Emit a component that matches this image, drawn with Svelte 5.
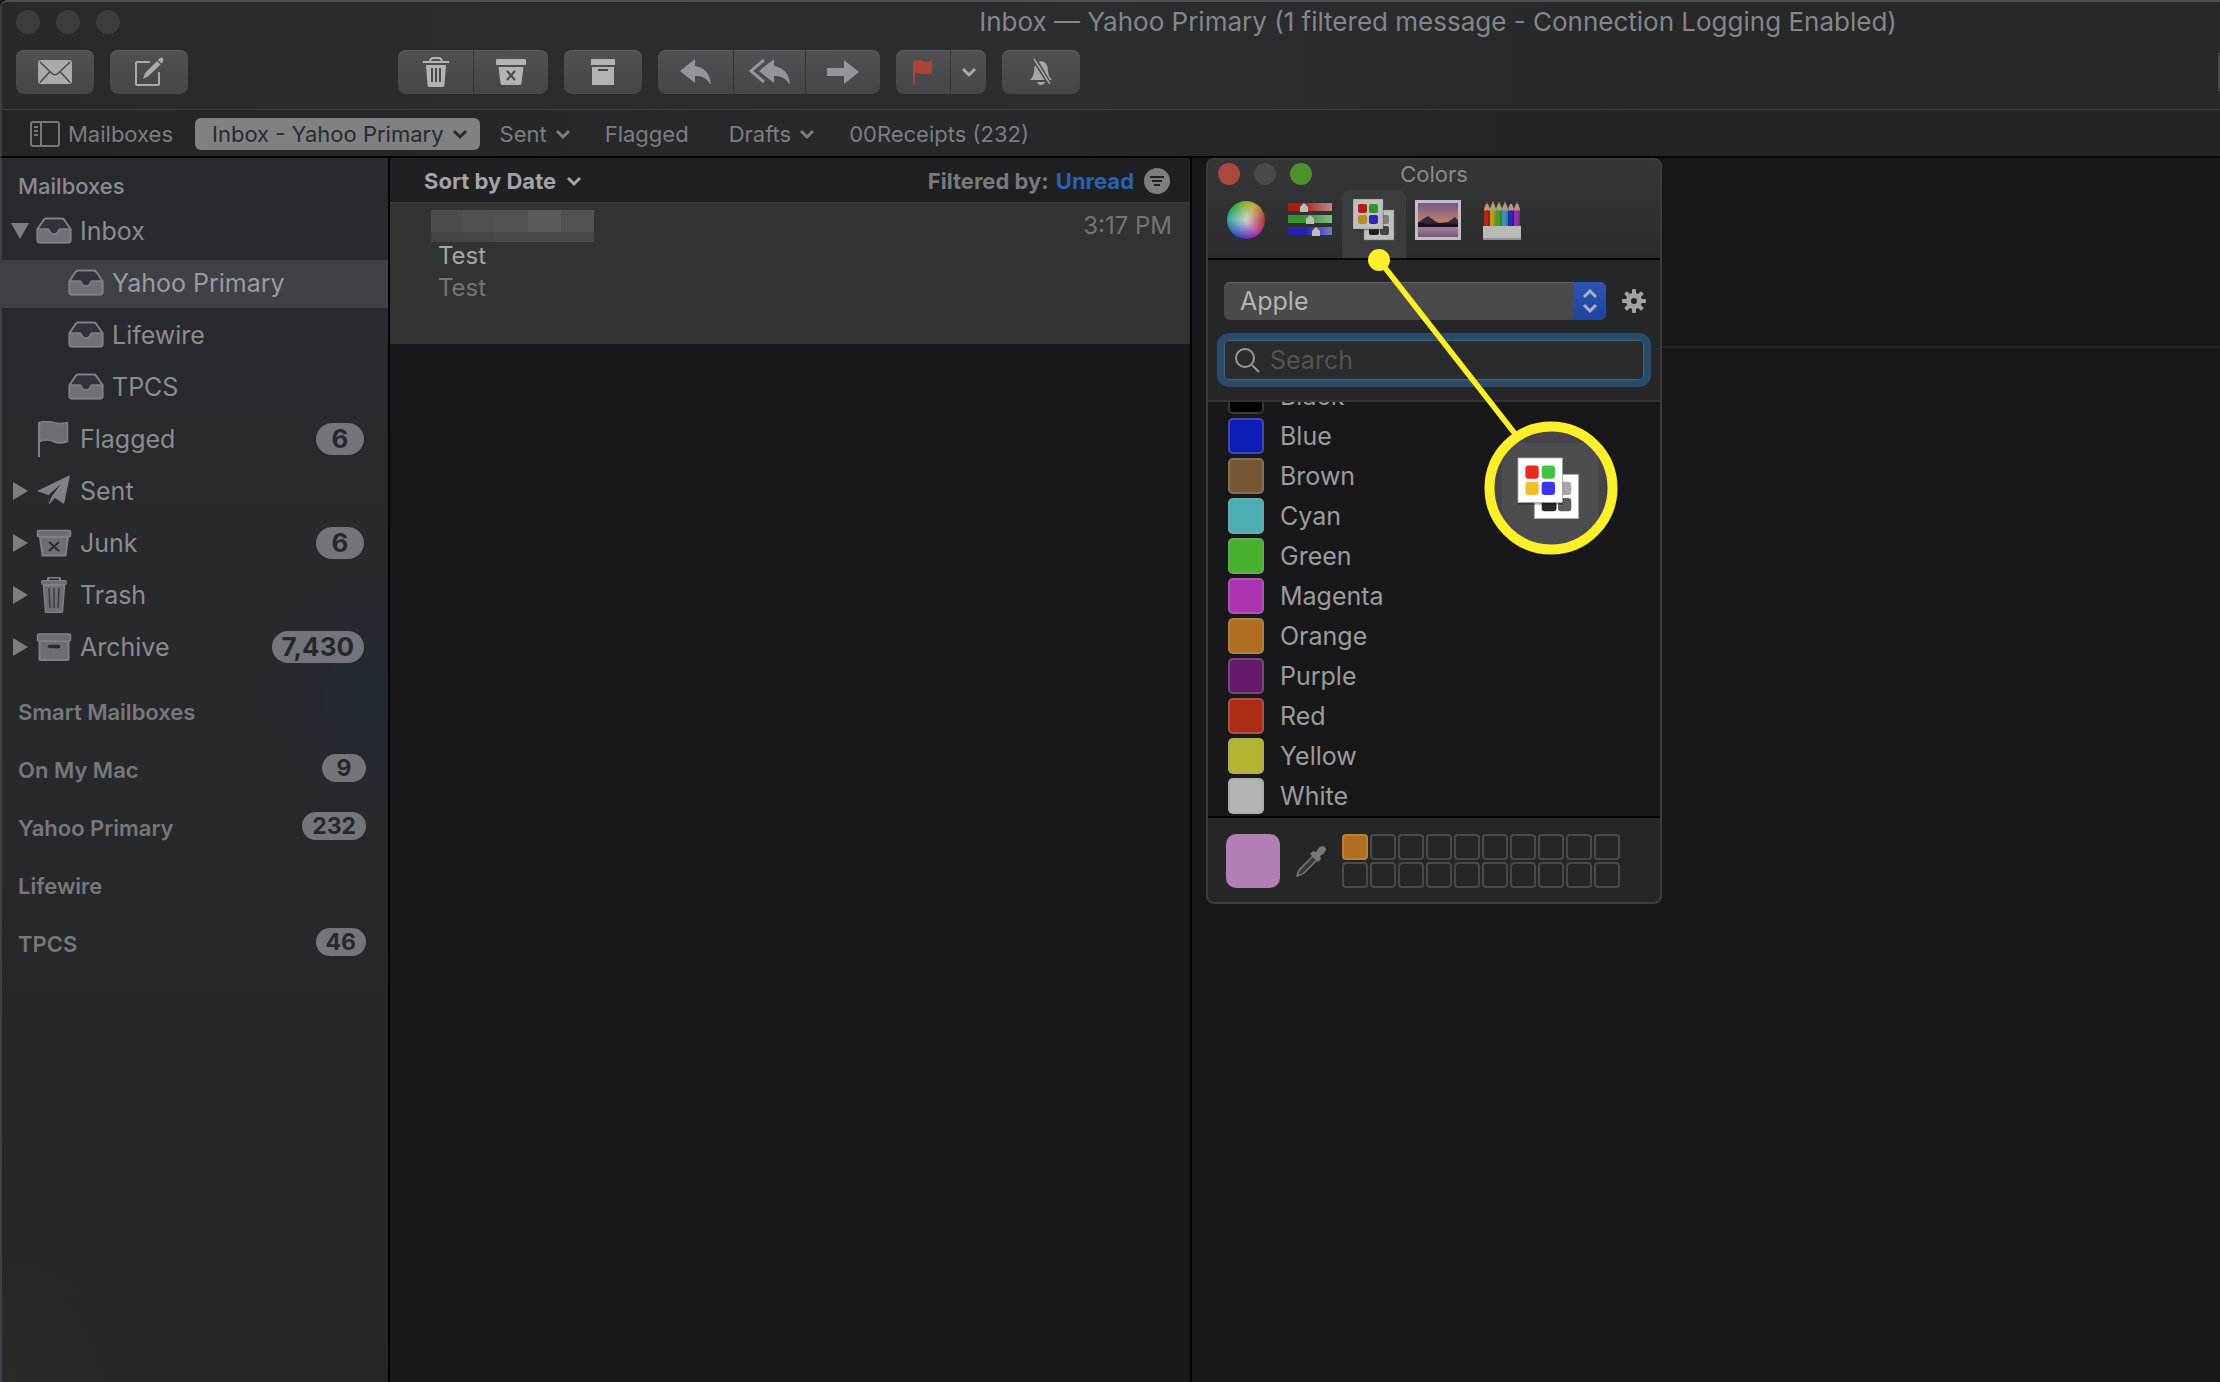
<script lang="ts">
	let query = $state("");
	let palette = $state("Apple");
	let activeTab = $state("palettes");

	const favorites = [
		{ name: "Inbox - Yahoo Primary", menu: true, active: true },
		{ name: "Sent", menu: true },
		{ name: "Flagged" },
		{ name: "Drafts", menu: true },
		{ name: "00Receipts (232)" },
	];

	const mailboxes = [
		{ name: "Inbox", icon: "inbox", arrow: "open" },
		{ name: "Yahoo Primary", icon: "inbox", child: true, selected: true },
		{ name: "Lifewire", icon: "inbox", child: true },
		{ name: "TPCS", icon: "inbox", child: true },
		{ name: "Flagged", icon: "flag", count: "6" },
		{ name: "Sent", icon: "plane", arrow: "closed" },
		{ name: "Junk", icon: "junk", arrow: "closed", count: "6" },
		{ name: "Trash", icon: "trash", arrow: "closed" },
		{ name: "Archive", icon: "archive", arrow: "closed", count: "7,430" },
	];

	const accounts = [
		{ name: "Smart Mailboxes" },
		{ name: "On My Mac", count: "9" },
		{ name: "Yahoo Primary", count: "232" },
		{ name: "Lifewire" },
		{ name: "TPCS", count: "46" },
	];

	const tabs = ["wheel", "sliders", "palettes", "image", "pencils"];

	const colors = [
		{ name: "Black", value: "#000000" },
		{ name: "Blue", value: "#0f1eb6" },
		{ name: "Brown", value: "#765736" },
		{ name: "Cyan", value: "#4caeb3" },
		{ name: "Green", value: "#47b02c" },
		{ name: "Magenta", value: "#ac33b1" },
		{ name: "Orange", value: "#b06f20" },
		{ name: "Purple", value: "#651a6c" },
		{ name: "Red", value: "#ad2c16" },
		{ name: "Yellow", value: "#b3b530" },
		{ name: "White", value: "#b4b4b4" },
	];

	const redacted = ["#4c4c4c", "#505050", "#525252", "#5b5b5b", "#525252", "#444444", "#464646", "#494949", "#494949", "#494949"];
	const wells = Array.from({ length: 20 }, (_, i) => (i === 0 ? "#b06f20" : "transparent"));
	const pencils = ["#b3241b", "#b89a23", "#3f9d2a", "#3f93b0", "#1f2fb0", "#a02ba8"];
</script>

{#snippet chevron()}
	<svg class="chevron" width="16" height="12" viewBox="0 0 16 12"><path d="M2 3l6 6 6-6" /></svg>
{/snippet}

{#snippet cards(bright: boolean)}
	<g class:dimmed={!bright}>
		<rect x="11" y="11" width="30" height="30" fill="#fff" stroke="#999" stroke-width="0.5" />
		<rect x="16" y="27" width="10" height="9" rx="2" fill="#29292b" />
		<rect x="27" y="27" width="9" height="9" rx="2" fill="#5c5c5f" />
		<rect x="27" y="16" width="9" height="9" rx="2" fill="#a8a8a8" />
		<rect x="0.5" y="1.5" width="30" height="30" fill="#000" opacity="0.3" />
		<rect x="0" y="0" width="30" height="30" fill="#fff" stroke="#aaa" stroke-width="0.5" />
		<rect x="5" y="5" width="9" height="9" rx="2" fill="#ea2a1a" />
		<rect x="16" y="5" width="9" height="9" rx="2" fill="#43c343" />
		<rect x="5" y="16" width="9" height="9" rx="2" fill="#f4bd2c" />
		<rect x="16" y="16" width="9" height="9" rx="2" fill="#3d35ee" />
	</g>
{/snippet}

{#snippet mailboxIcon(name: string)}
	<svg class="mailbox-icon" width="36" height="36" viewBox="0 0 36 36">
		{#if name === "inbox"}
			<path d="M1.5 16L8 6.5q.7-1 2-1h16q1.300 0 2 1L34.500 16v11.500q0 2-2 2h-29q-2 0-2-2z" fill="#303339" stroke="#808186" stroke-width="2" />
			<path d="M1.500 16h10.500q1 0 1.500 1.500 1 3.500 4.500 3.500t4.500-3.500Q23 16 24 16h10.500v11.500q0 2-2 2h-29q-2 0-2-2z" fill="#707176" stroke="#808186" stroke-width="1.500" />
		{:else if name === "flag"}
			<path d="M3 1v35" stroke="#808186" stroke-width="2" />
			<path d="M3.500 1.500q8-2 14 0t14 0v19q-8 3-14 0t-14 0z" fill="#6d6e73" stroke="#808186" stroke-width="1.500" />
		{:else if name === "plane"}
			<path d="M1 18L34 2l-6 29-9-6-6 6-1-9z" fill="#808186" />
			<path d="M12 22.500L25 11l-9 12-3 7z" fill="#292a2e" />
			<path d="M16.500 23.500l-3 7" stroke="#808186" />
		{:else if name === "junk"}
			<path d="M4 12h28l-2.500 18.500h-23z" fill="#6d6e73" stroke="#808186" stroke-width="2" />
			<rect x="1.500" y="5.500" width="33" height="6" rx="1" fill="#6d6e73" stroke="#808186" stroke-width="1.500" />
			<path d="M13 17l10 9M23 17l-10 9" stroke="#292a2e" stroke-width="2" />
		{:else if name === "trash"}
			<path d="M12 4V2q0-1.500 1.500-1.500h9q1.500 0 1.500 1.500v2" fill="none" stroke="#808186" stroke-width="2" />
			<rect x="5.500" y="3.500" width="25" height="4" rx="1" fill="#6d6e73" stroke="#808186" />
			<path d="M7.500 8.500h21l-2 26q0 1-2 1h-13q-2 0-2-1z" fill="#6d6e73" stroke="#808186" stroke-width="1.500" />
			<path d="M13 11l1 20M18 11v20M23 11l-1 20" stroke="#3c3d41" stroke-width="1.500" />
		{:else}
			<rect x="3.500" y="12" width="29" height="19" rx="1" fill="#6d6e73" stroke="#808186" stroke-width="2" />
			<rect x="1.500" y="5" width="33" height="7" rx="1" fill="#6d6e73" stroke="#808186" stroke-width="1.500" />
			<path d="M13.500 17.500h9" stroke="#292a2e" stroke-width="3.500" stroke-linecap="round" />
		{/if}
	</svg>
{/snippet}

{#snippet tabIcon(name: string)}
	{#if name === "wheel"}
		<span class="wheel"></span>
	{:else if name === "sliders"}
		<svg width="44" height="36" viewBox="0 0 44 36">
			<defs>
				<linearGradient id="r"><stop offset="0.300" stop-color="#b01a12" /><stop offset="1" stop-color="#bd8886" /></linearGradient>
				<linearGradient id="g"><stop offset="0.400" stop-color="#3a9333" /><stop offset="1" stop-color="#86b985" /></linearGradient>
				<linearGradient id="b"><stop offset="0.400" stop-color="#2722ad" /><stop offset="1" stop-color="#7678bd" /></linearGradient>
			</defs>
			<rect y="1" width="44" height="8" fill="url(#r)" />
			<rect y="13" width="44" height="8" fill="url(#g)" />
			<rect y="25" width="44" height="8" fill="url(#b)" />
			<path d="M16 1l4 4v5h-8V5zM22 13l4 4v5h-8v-5zM28 25l4 4v5h-8v-5z" fill="#bcbcbc" />
		</svg>
	{:else if name === "palettes"}
		<svg width="42" height="42" viewBox="0 0 42 42">{@render cards(false)}</svg>
	{:else if name === "image"}
		<svg width="46" height="40" viewBox="0 0 46 40">
			<defs>
				<linearGradient id="sky" x2="0" y2="1"><stop stop-color="#75588b" /><stop offset="1" stop-color="#cf8460" /></linearGradient>
				<linearGradient id="lake" x2="0" y2="1"><stop stop-color="#a87d94" /><stop offset="1" stop-color="#745a7b" /></linearGradient>
			</defs>
			<rect width="46" height="40" fill="#c0bec1" />
			<rect x="3" y="3" width="40" height="22" fill="url(#sky)" />
			<path d="M3 23l5-4 5-3 7 5 4 2 9-1 7-5 3 3v7H3z" fill="#32293f" />
			<path d="M3 22l10 2 13-1 17 1v3H3z" fill="#15121c" />
			<rect x="3" y="27" width="40" height="10" fill="url(#lake)" />
		</svg>
	{:else}
		<svg width="38" height="40" viewBox="0 0 38 40">
			{#each pencils as color, i}
				<path d="M{i * 6 + 1} 9l3-8 3 8v18h-6z" fill={color} />
				<path d="M{i * 6 + 1} 9l2-5h2l2 5-1 2-2-1-2 1z" fill="#b39a7c" />
				<path d="M{i * 6 + 3} 4l1-3 1 3z" fill={color} />
				<path d="M{i * 6 + 6} 11v16" stroke="#000" stroke-opacity="0.300" />
			{/each}
			<rect y="26" width="38" height="14" fill="#b9b9b9" />
			<rect y="38" width="38" height="2" fill="#929292" />
		</svg>
	{/if}
{/snippet}

<div class="window">
	<header>
		<div class="titlebar">
			<div class="lights">
				<button aria-label="Close"></button>
				<button aria-label="Minimize"></button>
				<button aria-label="Zoom"></button>
			</div>
			<h1>Inbox — Yahoo Primary (1 filtered message - Connection Logging Enabled)</h1>
		</div>

		<div class="toolbar">
			<div class="group">
				<button aria-label="Get mail">
					<svg width="36" height="26" viewBox="0 0 36 26">
						<rect x="1" y="1" width="34" height="24" rx="3" fill="#a9aaae" />
						<path d="M3 3l11.500 11q3.500 3.500 7 0L33 3M3 23.500l9.500-10.500M33 23.500l-9.500-10.500" fill="none" stroke="#48494d" stroke-width="1.500" />
					</svg>
				</button>
			</div>
			<div class="group compose">
				<button aria-label="New message">
					<svg width="30" height="30" viewBox="0 0 30 30">
						<path d="M16 5H3q-1 0-1 1v21q0 1 1 1h21q1 0 1-1V15" fill="none" stroke="#a9aaae" stroke-width="2" />
						<path d="M9 22l2-6L23 4l3.500 3.500L14.500 19zM24 3l2-2q2-1 3 .500t0 3L27.500 6.500z" fill="#a9aaae" />
					</svg>
				</button>
			</div>
			<div class="group wide">
				<button aria-label="Delete">
					<svg width="26" height="30" viewBox="0 0 26 30">
						<path d="M0 4h26v2H0zM3 8h20l-1.500 20q0 2-2 2h-13q-2 0-2-2z" fill="#b2b3b7" />
						<path d="M7 4q1-3 3-3h6q2 0 3 3" fill="none" stroke="#b2b3b7" stroke-width="2" />
						<path d="M9 11v14M13 11v14M17 11v14" stroke="#48494d" stroke-width="2" />
					</svg>
				</button>
				<button aria-label="Junk">
					<svg width="30" height="28" viewBox="0 0 30 28">
						<rect y="1" width="30" height="6" rx="1" fill="#b2b3b7" />
						<path d="M2.500 9h25l-2 16q0 2-2 2h-17q-2 0-2-2z" fill="#b2b3b7" />
						<path d="M11 13l8 9M19 13l-8 9" stroke="#48494d" stroke-width="2" />
					</svg>
				</button>
			</div>
			<div class="group">
				<button aria-label="Archive">
					<svg width="26" height="28" viewBox="0 0 26 28">
						<path d="M1 1h24v6H1zM2 9h22v18H2z" fill="#b2b3b7" />
						<path d="M8 12h10" stroke="#48494d" stroke-width="2" />
					</svg>
				</button>
			</div>
			<div class="group wide">
				<button aria-label="Reply">
					<svg width="32" height="28" viewBox="0 0 32 28">
						<path d="M0 13L15 1v7q14 2 16 18h-1q-5-9-15-8v7z" fill="#94959a" />
					</svg>
				</button>
				<button class="middle" aria-label="Reply all">
					<svg width="42" height="28" viewBox="0 0 42 28">
						<path d="M10 13L25 1v7q14 2 16 18h-1q-5-9-15-8v7z" fill="#94959a" />
						<path d="M15 2L2 13l13 11" fill="none" stroke="#94959a" stroke-width="3" />
					</svg>
				</button>
				<button aria-label="Forward">
					<svg width="32" height="26" viewBox="0 0 32 26">
						<path d="M0 9h17V1l15 12-15 12v-8H0z" fill="#94959a" />
					</svg>
				</button>
			</div>
			<div class="group">
				<button class="flag" aria-label="Flag">
					<svg width="20" height="26" viewBox="0 0 20 26">
						<path d="M0 2q5-2 9 0t10-1v13q-6 2-10 1t-7-1v12H0z" fill="#a94436" />
					</svg>
				</button>
				<button class="flag-menu" aria-label="Flag colors">{@render chevron()}</button>
			</div>
			<div class="group">
				<button aria-label="Mute">
					<svg width="26" height="28" viewBox="0 0 26 28">
						<path d="M2 22q4-4 4-9 0-9 7-10 7 1 7 10 0 5 4 9zM9 24h8q-1 3-4 3t-4-3z" fill="#a5a6aa" />
						<path d="M5 2l16 25M8 1l15 25" stroke="#48494d" stroke-width="2" />
						<path d="M6 1l16 25" stroke="#a5a6aa" stroke-width="1.500" />
					</svg>
				</button>
			</div>
			<span class="search-edge"></span>
		</div>

		<nav class="favorites" aria-label="Favorites">
			<button class="toggle">
				<svg width="30" height="26" viewBox="0 0 30 26" fill="none" stroke="#77787b" stroke-width="2">
					<rect x="1" y="1" width="28" height="24" rx="2" />
					<path d="M11 1v24M4 6h4M4 10h4M4 14h4" />
				</svg>
				Mailboxes
			</button>
			{#each favorites as favorite}
				<button class:active={favorite.active} class:plain={!favorite.menu}>
					{favorite.name}
					{#if favorite.menu}{@render chevron()}{/if}
				</button>
			{/each}
		</nav>
	</header>

	<main>
		<aside>
			<h2>Mailboxes</h2>
			<ul class="mailboxes">
				{#each mailboxes as box}
					<li class:selected={box.selected} class:child={box.child}>
						<span class="arrow {box.arrow}"></span>
						{@render mailboxIcon(box.icon)}
						<span class="name">{box.name}</span>
						{#if box.count}<span class="badge">{box.count}</span>{/if}
					</li>
				{/each}
			</ul>
			<ul class="accounts">
				{#each accounts as account}
					<li>
						<span class="name">{account.name}</span>
						{#if account.count}<span class="badge">{account.count}</span>{/if}
					</li>
				{/each}
			</ul>
		</aside>

		<section class="messages">
			<div class="sort">
				<button>Sort by Date {@render chevron()}</button>
				<span class="filter">Filtered by: <a href="#unread">Unread</a></span>
				<button aria-label="Filter">
					<svg width="26" height="26" viewBox="0 0 26 26">
						<circle cx="13" cy="13" r="13" fill="#7d7e80" />
						<path d="M6 9h14M8 13h10M10 17h6" stroke="#1e2023" stroke-width="2" />
					</svg>
				</button>
			</div>
			<article>
				<div class="from">
					<div class="redacted">
						{#each redacted as shade}
							<i style="background-color:{shade}"></i>
						{/each}
					</div>
					<time>3:17 PM</time>
				</div>
				<p class="subject">Test</p>
				<p>Test</p>
			</article>
		</section>

		<section class="preview">
			<div class="preview-header"></div>

			<div class="colors-panel">
				<div class="panel-top">
					<div class="panel-title">
						<div class="lights small">
							<button class="close" aria-label="Close colors"></button>
							<button class="minimize" aria-label="Minimize colors"></button>
							<button class="zoom" aria-label="Zoom colors"></button>
						</div>
						<h3>Colors</h3>
					</div>
					<div class="tabs">
						{#each tabs as tab}
							<button class:active={activeTab === tab} aria-label={tab} onclick={() => (activeTab = tab)}>
								{@render tabIcon(tab)}
							</button>
						{/each}
					</div>
				</div>

				<div class="picker">
					<div class="palette-row">
						<label class="select">
							<select bind:value={palette} aria-label="Palette">
								<option>Apple</option>
							</select>
							<span class="stepper">
								<svg width="16" height="26" viewBox="0 0 16 26"><path d="M2 9l6-6 6 6M2 17l6 6 6-6" /></svg>
							</span>
						</label>
						<button class="gear" aria-label="Palette options">
							<svg width="26" height="26" viewBox="-13 -13 26 26">
								{#each [0, 45, 90, 135] as angle}
									<rect x="-2" y="-12" width="4" height="24" rx="1" transform="rotate({angle})" fill="#a0a1a2" />
								{/each}
								<circle r="8" fill="#a0a1a2" />
								<circle r="3" fill="#242628" />
							</svg>
						</button>
					</div>
					<label class="search">
						<svg width="26" height="26" viewBox="0 0 26 26" fill="none" stroke="#97989a" stroke-width="2">
							<circle cx="11" cy="11" r="9" /><path d="M18 18l7 7" />
						</svg>
						<input type="text" placeholder="Search" aria-label="Search colors" bind:value={query} />
					</label>
				</div>

				<ul class="color-list">
					{#each colors as color}
						<li><i style="background-color:{color.value}"></i>{color.name}</li>
					{/each}
				</ul>

				<div class="panel-bottom">
					<button class="current" aria-label="Current color"></button>
					<button class="dropper" aria-label="Pick color from screen">
						<svg width="32" height="32" viewBox="0 0 32 32">
							<path d="M18 11l4 4L9 28q-3 2-7 3 1-4 3-7z" fill="#37393b" stroke="#77787a" stroke-width="1.500" />
							<path d="M15 9l3-3 3 1q1-3 4-5 3-2 5 0t0 5q-2 3-5 4l1 3-3 3z" fill="#77787a" />
						</svg>
					</button>
					<div class="wells">
						{#each wells as well, i}
							<button aria-label="Saved color {i + 1}" style="background-color:{well}"></button>
						{/each}
					</div>
				</div>
			</div>

			<!-- magnified palettes tab, anchored next to the panel -->
			<svg class="callout" width="260" height="320" viewBox="0 0 260 320">
				<defs>
					<clipPath id="lens"><circle cx="191" cy="248" r="58" /></clipPath>
				</defs>
				<path d="M19 20L156 195" stroke="#fbf029" stroke-width="5.500" />
				<circle cx="19" cy="20" r="11" fill="#fbf029" />
				<g clip-path="url(#lens)">
					<rect x="130" y="180" width="124" height="130" fill="#454548" />
					<rect x="142" y="203" width="96" height="120" rx="6" fill="#4d4d50" />
				</g>
				<g transform="translate(158 218) scale(1.480)">{@render cards(true)}</g>
				<circle cx="191" cy="248" r="61.500" fill="none" stroke="#fbf029" stroke-width="10" />
			</svg>
		</section>
	</main>
</div>

<style>
	:global(body) {
		margin: 0;
		background-color: #17171b;
	}
	.window {
		display: flex;
		flex-direction: column;
		min-height: 100vh;
		box-sizing: border-box;
		overflow: hidden;
		border-top: 2px solid #4e5154;
		border-top-left-radius: 8px;
		font-family: Inter, "Liberation Sans", sans-serif;
		font-size: 24px;
		color: #8b8c8f;
	}
	button, input, select {
		font: inherit;
		color: inherit;
		border: 0;
		padding: 0;
		margin: 0;
		background: none;
	}
	h1, h2, h3, p, ul {
		margin: 0;
		padding: 0;
		font-weight: 400;
		list-style: none;
	}
	svg {
		display: block;
		flex: none;
	}
	.chevron {
		fill: none;
		stroke: currentColor;
		stroke-width: 3;
	}

	header {
		background: linear-gradient(90deg, #28292b, #2b2c30 25%, #2c2d31 50%, #27282a 75%, #27282a);
		border-left: 2px solid #3c3e42;
		border-bottom: 2px solid #060607;
	}
	.titlebar {
		display: flex;
		align-items: center;
		height: 40px;
	}
	.lights {
		display: flex;
		gap: 16px;
		margin-left: 14px;
	}
	.lights button {
		width: 24px;
		height: 24px;
		border-radius: 50%;
		background-color: #3b3d40;
	}
	h1 {
		flex: 1;
		margin-left: 536px;
		font-size: 26px;
		line-height: 42px;
		text-align: center;
		white-space: nowrap;
		color: #858689;
	}
	.toolbar {
		display: flex;
		align-items: center;
		gap: 16px;
		height: 60px;
		padding: 0 0 7px 14px;
	}
	.group {
		display: flex;
		height: 44px;
		border-radius: 8px;
		overflow: hidden;
		background: linear-gradient(#505155, #45464a);
		box-shadow: inset 0 1px #5c5d60;
	}
	.group button {
		display: flex;
		align-items: center;
		justify-content: center;
		width: 78px;
	}
	.group.compose {
		margin-right: 194px;
	}
	.group.wide button {
		width: 75px;
	}
	.group.wide .middle {
		width: 72px;
	}
	.group button + button {
		border-left: 1px solid #34353a;
	}
	.group .flag {
		width: 54px;
	}
	.group .flag-menu {
		width: 36px;
		color: #a9aaae;
	}
	.search-edge {
		width: 2px;
		height: 38px;
		margin-left: auto;
		background-color: #47484a;
	}
	.favorites {
		display: flex;
		align-items: center;
		gap: 34px;
		height: 44px;
		padding: 2px 0 0 28px;
		border-top: 1px solid #3e3f43;
		background: linear-gradient(90deg, #242527, #28292c 40%, #222426 70%);
		font-size: 22px;
		color: #7d7e81;
	}
	.favorites button {
		display: flex;
		align-items: center;
		gap: 8px;
		white-space: nowrap;
	}
	.favorites .plain {
		padding-right: 6px;
	}
	.favorites .active {
		height: 32px;
		margin: 0 -14px 0 -12px;
		padding: 0 12px 0 17px;
		border-radius: 6px;
		background-color: #808184;
		color: #292a2e;
	}

	main {
		display: flex;
		flex: 1;
	}
	aside {
		width: 386px;
		flex: none;
		border-left: 2px solid #3f4144;
		border-right: 2px solid #000;
		background:
			radial-gradient(circle at 100% 44%, #222933, transparent 130px),
			radial-gradient(circle at 0 100%, #2a2a28, transparent 200px),
			linear-gradient(#292a2f, #28292c 50%, #242528);
	}
	h2 {
		padding: 10px 0 0 16px;
		font-size: 22px;
		font-weight: 500;
		line-height: 36px;
	}
	.mailboxes {
		display: flex;
		flex-direction: column;
		gap: 4px;
		padding-top: 4px;
		font-size: 25px;
	}
	.mailboxes li {
		display: flex;
		align-items: center;
		height: 48px;
		box-sizing: border-box;
		padding: 0 24px 2px 0;
	}
	.mailboxes .selected {
		background-color: #404146;
		color: #9a9b9f;
	}
	.arrow {
		width: 34px;
		box-sizing: border-box;
		padding-left: 9px;
		line-height: 0;
	}
	.child .arrow {
		width: 66px;
	}
	.arrow.closed {
		padding-left: 11px;
	}
	.open::before, .closed::before {
		content: "";
		display: inline-block;
		border: 9px solid transparent;
	}
	.open::before {
		border-width: 16px 9px 0;
		border-top-color: #7d7e82;
	}
	.closed::before {
		border-width: 9px 0 9px 15px;
		border-left-color: #7d7e82;
	}
	.mailbox-icon {
		margin-right: 8px;
	}
	.name {
		flex: 1;
		white-space: nowrap;
	}
	.badge {
		min-width: 48px;
		box-sizing: border-box;
		padding: 0 10px;
		border-radius: 16px;
		background-color: #74757a;
		color: #27282c;
		font-size: 26px;
		font-weight: 700;
		line-height: 32px;
		text-align: center;
	}
	.accounts {
		padding: 11px 22px 0 16px;
		font-size: 22px;
		font-weight: 600;
		color: #77787c;
	}
	.accounts li {
		display: flex;
		align-items: center;
		height: 58px;
	}
	.accounts .badge {
		min-width: 44px;
		margin-bottom: 4px;
		font-size: 23px;
		line-height: 28px;
	}

	.messages {
		width: 800px;
		flex: none;
		border-right: 2px solid #000;
		background-color: #17181c;
	}
	.sort {
		display: flex;
		align-items: center;
		gap: 10px;
		height: 42px;
		padding: 2px 20px 0 34px;
		border-bottom: 1px solid #3a3b3c;
		background-color: #1e2023;
		font-size: 22px;
		font-weight: 700;
		color: #a3a4a6;
	}
	.sort button {
		display: flex;
		align-items: center;
		gap: 10px;
	}
	.filter {
		margin-left: auto;
		color: #797a7c;
	}
	.filter a {
		margin-left: 2px;
		color: #2961b8;
		text-decoration: none;
	}
	article {
		height: 141px;
		box-sizing: border-box;
		padding: 7px 18px 0 41px;
		background-color: #333333;
		color: #757575;
	}
	article p {
		padding-left: 7px;
		line-height: 32px;
	}
	article .subject {
		color: #a6a6a6;
	}
	.from {
		display: flex;
		justify-content: space-between;
		margin-bottom: -2px;
		line-height: 32px;
	}
	.redacted {
		display: grid;
		grid-template-columns: 31px 32px 34px 33px 33px;
		grid-template-rows: 22px 10px;
	}

	.preview {
		position: relative;
		flex: 1;
		background-color: #17171b;
	}
	.preview-header {
		height: 188px;
		margin-left: 24px;
		border-bottom: 2px solid #232427;
	}
	.colors-panel {
		position: absolute;
		top: 0;
		left: 14px;
		width: 456px;
		box-sizing: border-box;
		border: 2px solid #3b3c3e;
		border-radius: 8px;
		overflow: hidden;
		background-color: #242628;
		font-size: 25px;
		color: #9c9c9d;
	}
	.panel-top {
		border-bottom: 2px solid #08090a;
		background: linear-gradient(#353638, #2b2c2e);
	}
	.panel-title {
		display: grid;
		grid-template-columns: 1fr auto 1fr;
		align-items: center;
		height: 28px;
		padding-bottom: 2px;
	}
	.small {
		gap: 14px;
		margin-left: 10px;
	}
	.small button {
		width: 22px;
		height: 22px;
	}
	.small .close {
		background-color: #ac473f;
	}
	.small .minimize {
		background-color: #4a4a4c;
	}
	.small .zoom {
		background-color: #4b922f;
	}
	h3 {
		font-size: 22px;
		line-height: 28px;
		color: #8a8b8c;
	}
	.tabs {
		display: flex;
		padding-left: 6px;
	}
	.tabs button {
		display: flex;
		justify-content: center;
		align-items: center;
		box-sizing: border-box;
		width: 64px;
		height: 68px;
		padding-bottom: 8px;
	}
	.tabs .active {
		border-radius: 8px 8px 0 0;
		background-color: #3b3c3e;
	}
	.wheel {
		width: 38px;
		height: 38px;
		border-radius: 50%;
		background:
			radial-gradient(circle, #d0d0d0, transparent 70%),
			conic-gradient(#8fae20, #b8a82a 30deg, #b03030 90deg, #b02a9c 140deg, #5a2ac0 180deg, #2a50b8 220deg, #2aa8a0 270deg, #2aac3c 320deg, #8fae20);
	}
	.dimmed {
		filter: brightness(0.750);
	}
	.picker {
		padding: 22px 9px 13px;
		border-bottom: 2px solid #313335;
	}
	.palette-row {
		display: flex;
		align-items: center;
		gap: 15px;
		margin-bottom: 13px;
		padding-left: 7px;
	}
	.select {
		display: flex;
		width: 382px;
		height: 38px;
		border-radius: 6px;
		overflow: hidden;
		background-color: #4a4a4a;
		box-shadow: inset 0 1px #606060;
	}
	.select select {
		flex: 1;
		padding-left: 16px;
		appearance: none;
		outline: 0;
		color: #b4b4b4;
	}
	.stepper {
		display: flex;
		align-items: center;
		justify-content: center;
		width: 32px;
		background: linear-gradient(#2b56b6, #2142a0);
	}
	.stepper path {
		fill: none;
		stroke: #aab2c4;
		stroke-width: 3;
	}
	.search {
		display: flex;
		align-items: center;
		gap: 10px;
		height: 40px;
		padding-left: 10px;
		border: 7px solid #2c4b69;
		border-radius: 12px;
		background-color: #292b2c;
		box-shadow: inset 0 0 0 1px #45617d;
	}
	.search input {
		flex: 1;
		min-width: 0;
		outline: 0;
	}
	.search input::placeholder {
		color: #535455;
		opacity: 1;
	}
	.color-list {
		display: flex;
		flex-direction: column;
		justify-content: flex-end;
		height: 414px;
		overflow: hidden;
		background-color: #18181a;
	}
	.color-list li {
		display: flex;
		flex: none;
		align-items: center;
		gap: 16px;
		height: 40px;
		padding-left: 20px;
	}
	.color-list i {
		width: 36px;
		height: 36px;
		box-sizing: border-box;
		border: 2px solid rgba(160, 160, 160, 0.35);
		border-radius: 5px;
	}
	.panel-bottom {
		display: flex;
		align-items: center;
		height: 82px;
		padding: 2px 0 0 18px;
		border-top: 2px solid #050606;
	}
	.current {
		width: 54px;
		height: 54px;
		border-radius: 10px;
		background-color: #b27eb4;
	}
	.dropper {
		margin: 0 15px;
	}
	.wells {
		display: grid;
		grid-template-columns: repeat(10, 26px);
		gap: 2px;
	}
	.wells button {
		height: 26px;
		border: 2px solid #48494b;
		border-radius: 4px;
	}
	.wells button:first-child {
		border-color: #b98237;
	}
	.callout {
		position: absolute;
		top: 82px;
		left: 168px;
		pointer-events: none;
	}
</style>
